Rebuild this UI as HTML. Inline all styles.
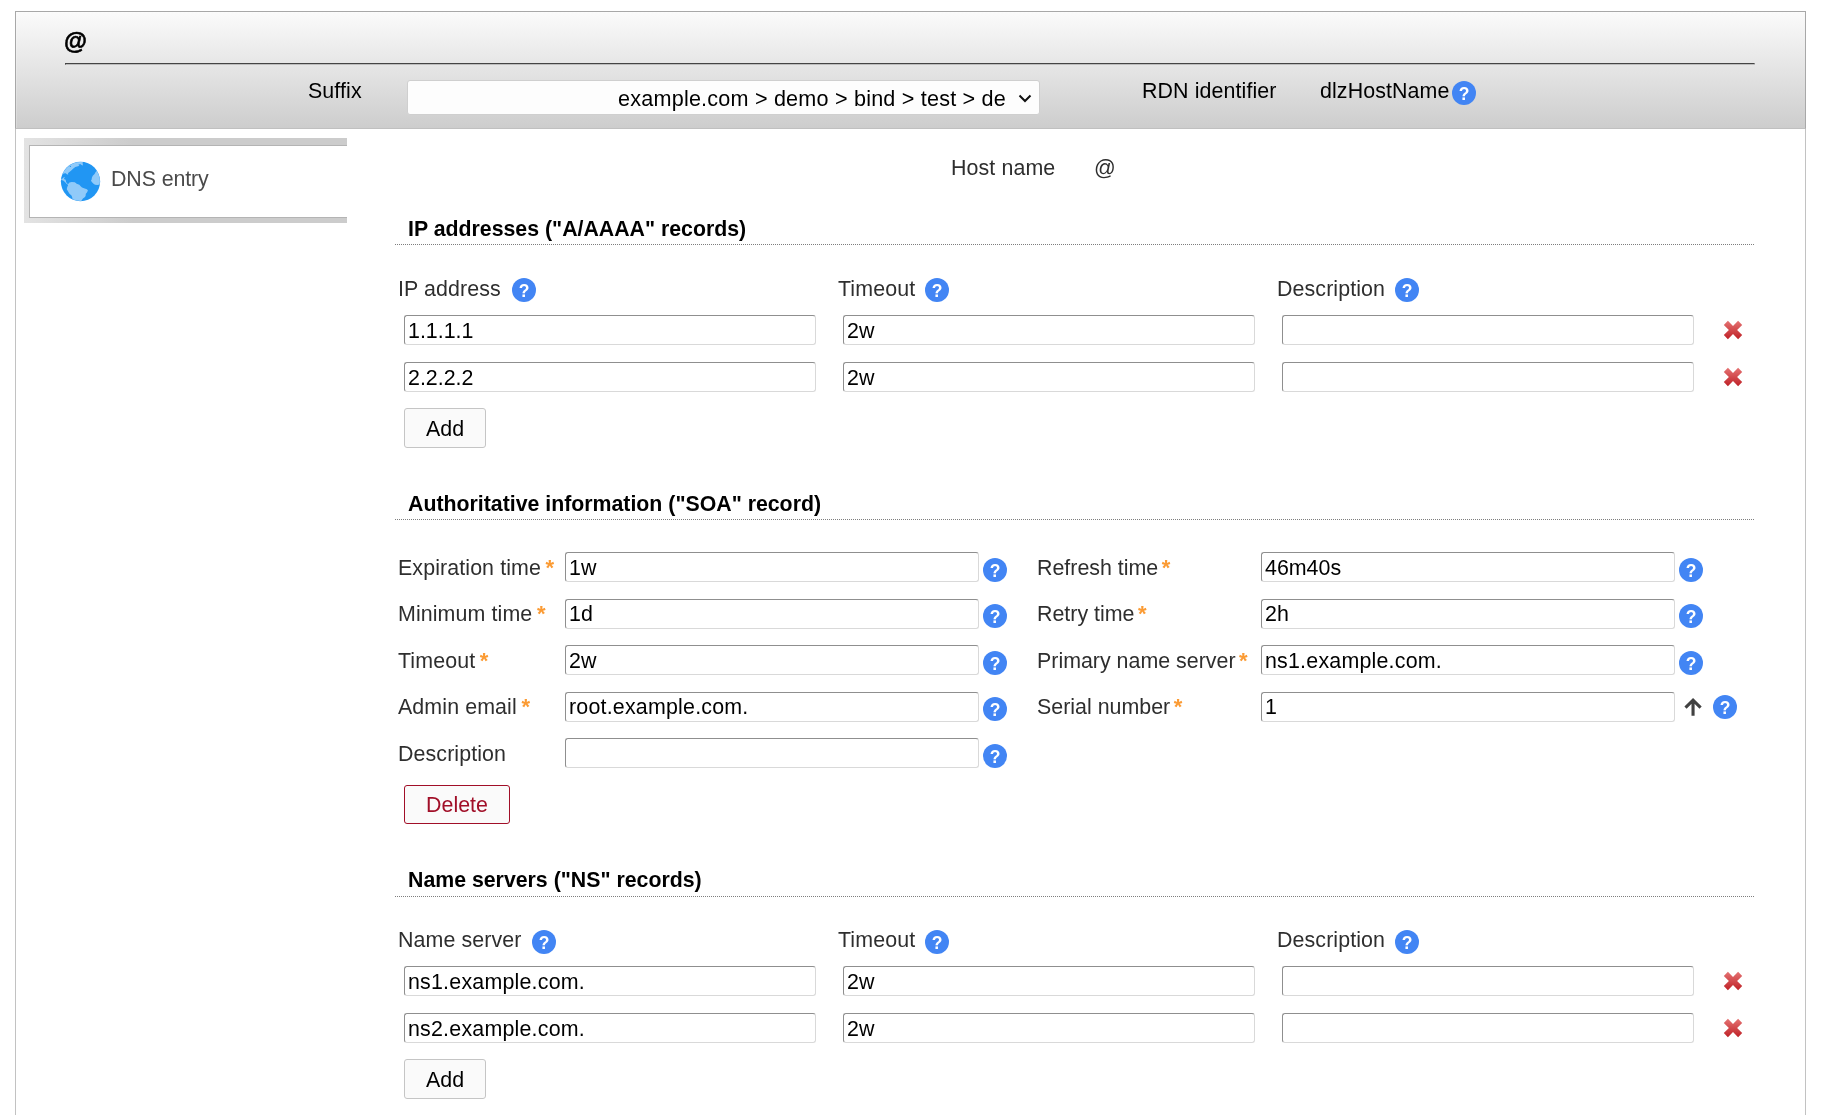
<!DOCTYPE html>
<html lang="en">
<head>
<meta charset="utf-8">
<title>DNS entry</title>
<style>
html,body{margin:0;padding:0;background:#fff;}
body{width:1827px;height:1115px;overflow:hidden;position:relative;font-family:"Liberation Sans",sans-serif;font-size:21.4px;color:#333;}
.abs{position:absolute;white-space:nowrap;}
#frame{position:absolute;left:15px;top:11px;width:1789px;height:1200px;border:1px solid #c2c2c2;background:#fff;}
#head{position:absolute;box-sizing:border-box;left:15px;top:11px;width:1791px;height:118px;border:1px solid #a8a8a8;border-bottom-color:#c0c0c0;background:linear-gradient(to bottom,#fbfbfb 0%,#cdcdcd 100%);box-shadow:inset 1px 1px 0 rgba(255,255,255,0.22);}
#title{left:64px;top:28px;font-weight:bold;font-size:23.5px;color:#000;line-height:26px;-webkit-text-stroke:0.6px #000;}
#titleline{position:absolute;box-sizing:border-box;left:65px;top:63px;width:1690px;height:2px;border-style:solid;border-width:1px;border-color:#444 #bdbdbd #bdbdbd #444;}
#sel{position:absolute;box-sizing:border-box;left:407px;top:80px;width:633px;height:35px;background:#fdfdfd;border:1px solid #cfcfcf;border-radius:3px;font-family:"Liberation Sans",sans-serif;font-size:21.6px;letter-spacing:0.2px;color:#000;line-height:31px;white-space:nowrap;}
#sel span{position:absolute;right:33px;top:2px;}
#sel svg{position:absolute;left:610.4px;top:12.5px;}
#tabwrap{position:absolute;left:24px;top:138px;width:323px;height:85px;background:linear-gradient(to right,#e3e3e3 0%,#cccccc 34%,#cccccc 100%);}
#tab{position:absolute;left:5px;top:7px;width:318px;height:73px;box-sizing:border-box;background:#fff;border:1px solid #b4b4b4;border-right:none;}
#globe{position:absolute;left:56px;top:157px;}
.lbl{position:absolute;white-space:nowrap;line-height:24px;letter-spacing:0.1px;color:#2e2e2e;}
.blk{color:#000;}
.inp{position:absolute;box-sizing:border-box;height:30px;border:1px solid;border-color:#8f8f8f #d9d9d9 #d9d9d9 #8f8f8f;border-radius:3px;background:#fff;color:#000;font-size:21.4px;line-height:28px;padding:1px 0 0 3px;letter-spacing:0;white-space:nowrap;overflow:hidden;}
.help{position:absolute;width:24px;height:24px;border-radius:50%;background:#4285f4;color:#fff;font-family:"Liberation Sans",sans-serif;font-weight:bold;font-size:17.5px;line-height:27px;text-align:center;letter-spacing:0;}
.sect{position:absolute;left:408px;font-weight:bold;color:#000;font-size:21.3px;line-height:26px;white-space:nowrap;}
.dots{position:absolute;left:395px;width:1359px;height:0;border-top:1px dotted #7e7e7e;}
.btn{position:absolute;box-sizing:border-box;margin:0;padding:0;font-family:inherit;letter-spacing:0;appearance:none;-webkit-appearance:none;border:1px solid #c5c5c5;border-radius:3px;background:#fafafa;color:#000;font-size:21.4px;text-align:center;}
.req{color:#fb9b34;margin-left:4.6px;font-size:22px;font-weight:bold;line-height:0;position:relative;top:0px;}
.del{position:absolute;width:20px;height:20px;}
body{will-change:transform;}
</style>
</head>
<body>
<div id="frame"></div>
<div id="head"></div>
<div id="title" class="abs">@</div>
<div id="titleline"></div>
<div class="lbl blk" style="left:308px;top:79px;">Suffix</div>
<div id="sel"><span>example.com &gt; demo &gt; bind &gt; test &gt; de</span><svg viewBox="0 0 14 10" width="14" height="10"><path d="M1.5 1.5 L7 7 L12.5 1.5" fill="none" stroke="#111" stroke-width="2"/></svg></div>
<div class="lbl blk" style="left:1142px;top:79px;">RDN identifier</div>
<div class="lbl blk" style="left:1320px;top:79px;">dlzHostName</div>
<div class="help" style="left:1452px;top:81px">?</div>
<div id="tabwrap"><div id="tab"></div></div>
<svg id="globe" viewBox="0 0 1115 1115" width="50" height="50">
<defs><clipPath id="gc"><circle cx="546.5" cy="546.5" r="433"/></clipPath></defs>
<circle cx="546.5" cy="546.5" r="438" fill="#2196f3"/>
<g clip-path="url(#gc)" fill="#90caf9">
<path d="M60 400 L130 400 L170 370 L215 365 L250 392 L277 386 L265 360 L300 335 L340 300 L380 260 L430 225 L490 205 L522 195 L498 172 L540 158 L570 176 L602 192 L594 140 L602 100 L300 60 L60 200 Z"/>
<path d="M90 488 L150 480 L178 448 L196 454 L176 490 L216 510 L226 560 L252 594 L272 600 L300 570 L350 555 L420 565 L460 595 L520 620 L550 650 L580 680 L640 700 L690 720 L712 745 L690 790 L665 820 L660 870 L640 900 L600 925 L572 970 L546 1010 L380 1000 L360 900 L345 860 L300 820 L270 770 L240 720 L250 670 L268 636 L262 612 L232 598 L200 560 L160 522 L90 512 Z"/>
<path d="M905 310 L880 340 L860 380 L820 420 L800 460 L795 500 L780 530 L800 560 L830 590 L870 620 L920 626 L1000 612 L1010 400 Z"/>
</g>
<circle cx="320" cy="210" r="14" fill="#2196f3"/>
</svg>
<div class="lbl " style="left:111px;top:167px;color:#4a4a4a;letter-spacing:-0.12px;">DNS entry</div>
<div class="lbl " style="left:951px;top:156px;">Host name</div>
<div class="lbl " style="left:1094px;top:156px;">@</div>
<div class="sect" style="top:216px">IP addresses ("A/AAAA" records)</div>
<div class="dots" style="top:244px"></div>
<div class="lbl " style="left:398px;top:277px;">IP address</div>
<div class="help" style="left:512px;top:278px">?</div>
<div class="lbl " style="left:838px;top:277px;">Timeout</div>
<div class="help" style="left:925px;top:278px">?</div>
<div class="lbl " style="left:1277px;top:277px;">Description</div>
<div class="help" style="left:1395px;top:278px">?</div>
<div class="inp" style="left:404px;top:315px;width:412px;">1.1.1.1</div>
<div class="inp" style="left:843px;top:315px;width:412px;">2w</div>
<div class="inp" style="left:1282px;top:315px;width:412px;"></div>
<svg class="del" style="left:1723px;top:320px" viewBox="0 0 20 20"><defs><linearGradient id="g1733330" x1="0" y1="0" x2="0" y2="1"><stop offset="0" stop-color="#e57373"/><stop offset="1" stop-color="#bf2026"/></linearGradient></defs><path fill="url(#g1733330)" d="M4.9 0.8 L10 5.9 L15.1 0.8 L19.2 4.9 L14.1 10 L19.2 15.1 L15.1 19.2 L10 14.1 L4.9 19.2 L0.8 15.1 L5.9 10 L0.8 4.9 Z"/></svg>
<div class="inp" style="left:404px;top:362px;width:412px;">2.2.2.2</div>
<div class="inp" style="left:843px;top:362px;width:412px;">2w</div>
<div class="inp" style="left:1282px;top:362px;width:412px;"></div>
<svg class="del" style="left:1723px;top:367px" viewBox="0 0 20 20"><defs><linearGradient id="g1733377" x1="0" y1="0" x2="0" y2="1"><stop offset="0" stop-color="#e57373"/><stop offset="1" stop-color="#bf2026"/></linearGradient></defs><path fill="url(#g1733377)" d="M4.9 0.8 L10 5.9 L15.1 0.8 L19.2 4.9 L14.1 10 L19.2 15.1 L15.1 19.2 L10 14.1 L4.9 19.2 L0.8 15.1 L5.9 10 L0.8 4.9 Z"/></svg>
<button type="button" class="btn" style="left:404px;top:408px;width:82px;height:40px;line-height:40px">Add</button>
<div class="sect" style="top:491px">Authoritative information ("SOA" record)</div>
<div class="dots" style="top:519px"></div>
<div class="lbl " style="left:398px;top:556px;">Expiration time<span class="req">*</span></div>
<div class="inp" style="left:565px;top:552px;width:414px;">1w</div>
<div class="help" style="left:983px;top:558px">?</div>
<div class="lbl " style="left:1037px;top:556px;letter-spacing:0;">Refresh time<span class="req" style="margin-left:3.6px">*</span></div>
<div class="inp" style="left:1261px;top:552px;width:414px;">46m40s</div>
<div class="help" style="left:1679px;top:558px">?</div>
<div class="lbl " style="left:398px;top:602px;">Minimum time<span class="req">*</span></div>
<div class="inp" style="left:565px;top:599px;width:414px;padding-top:0;">1d</div>
<div class="help" style="left:983px;top:604px">?</div>
<div class="lbl " style="left:1037px;top:602px;letter-spacing:0;">Retry time<span class="req" style="margin-left:3.6px">*</span></div>
<div class="inp" style="left:1261px;top:599px;width:414px;padding-top:0;">2h</div>
<div class="help" style="left:1679px;top:604px">?</div>
<div class="lbl " style="left:398px;top:649px;">Timeout<span class="req">*</span></div>
<div class="inp" style="left:565px;top:645px;width:414px;">2w</div>
<div class="help" style="left:983px;top:651px">?</div>
<div class="lbl " style="left:1037px;top:649px;letter-spacing:0;">Primary name server<span class="req" style="margin-left:3.6px">*</span></div>
<div class="inp" style="left:1261px;top:645px;width:414px;letter-spacing:0.21px;">ns1.example.com.</div>
<div class="help" style="left:1679px;top:651px">?</div>
<div class="lbl " style="left:398px;top:695px;">Admin email<span class="req">*</span></div>
<div class="inp" style="left:565px;top:692px;width:414px;padding-top:0;letter-spacing:0.21px;">root.example.com.</div>
<div class="help" style="left:983px;top:697px">?</div>
<div class="lbl " style="left:1037px;top:695px;letter-spacing:0;">Serial number<span class="req" style="margin-left:3.6px">*</span></div>
<div class="inp" style="left:1261px;top:692px;width:414px;padding-top:0;">1</div>
<svg class="abs" style="left:1683px;top:696px" width="20" height="22" viewBox="0 0 20 22"><path d="M10.05 19.7 V5 M2.5 11.7 L10.05 4.2 L17.6 11.7" fill="none" stroke="#414141" stroke-width="3.1"/></svg>
<div class="help" style="left:1713px;top:695px">?</div>
<div class="lbl " style="left:398px;top:742px;">Description</div>
<div class="inp" style="left:565px;top:738px;width:414px;"></div>
<div class="help" style="left:983px;top:744px">?</div>
<button type="button" class="btn" style="left:404px;top:785px;width:106px;height:39px;line-height:39px;border-color:#a10f28;color:#a10f28;background:#fafafa">Delete</button>
<div class="sect" style="top:867px">Name servers ("NS" records)</div>
<div class="dots" style="top:896px"></div>
<div class="lbl " style="left:398px;top:928px;">Name server</div>
<div class="help" style="left:532px;top:930px">?</div>
<div class="lbl " style="left:838px;top:928px;">Timeout</div>
<div class="help" style="left:925px;top:930px">?</div>
<div class="lbl " style="left:1277px;top:928px;">Description</div>
<div class="help" style="left:1395px;top:930px">?</div>
<div class="inp" style="left:404px;top:966px;width:412px;letter-spacing:0.21px;">ns1.example.com.</div>
<div class="inp" style="left:843px;top:966px;width:412px;">2w</div>
<div class="inp" style="left:1282px;top:966px;width:412px;"></div>
<svg class="del" style="left:1723px;top:971px" viewBox="0 0 20 20"><defs><linearGradient id="g1733981" x1="0" y1="0" x2="0" y2="1"><stop offset="0" stop-color="#e57373"/><stop offset="1" stop-color="#bf2026"/></linearGradient></defs><path fill="url(#g1733981)" d="M4.9 0.8 L10 5.9 L15.1 0.8 L19.2 4.9 L14.1 10 L19.2 15.1 L15.1 19.2 L10 14.1 L4.9 19.2 L0.8 15.1 L5.9 10 L0.8 4.9 Z"/></svg>
<div class="inp" style="left:404px;top:1013px;width:412px;letter-spacing:0.21px;">ns2.example.com.</div>
<div class="inp" style="left:843px;top:1013px;width:412px;">2w</div>
<div class="inp" style="left:1282px;top:1013px;width:412px;"></div>
<svg class="del" style="left:1723px;top:1018px" viewBox="0 0 20 20"><defs><linearGradient id="g17331028" x1="0" y1="0" x2="0" y2="1"><stop offset="0" stop-color="#e57373"/><stop offset="1" stop-color="#bf2026"/></linearGradient></defs><path fill="url(#g17331028)" d="M4.9 0.8 L10 5.9 L15.1 0.8 L19.2 4.9 L14.1 10 L19.2 15.1 L15.1 19.2 L10 14.1 L4.9 19.2 L0.8 15.1 L5.9 10 L0.8 4.9 Z"/></svg>
<button type="button" class="btn" style="left:404px;top:1059px;width:82px;height:40px;line-height:40px">Add</button>
</body>
</html>
